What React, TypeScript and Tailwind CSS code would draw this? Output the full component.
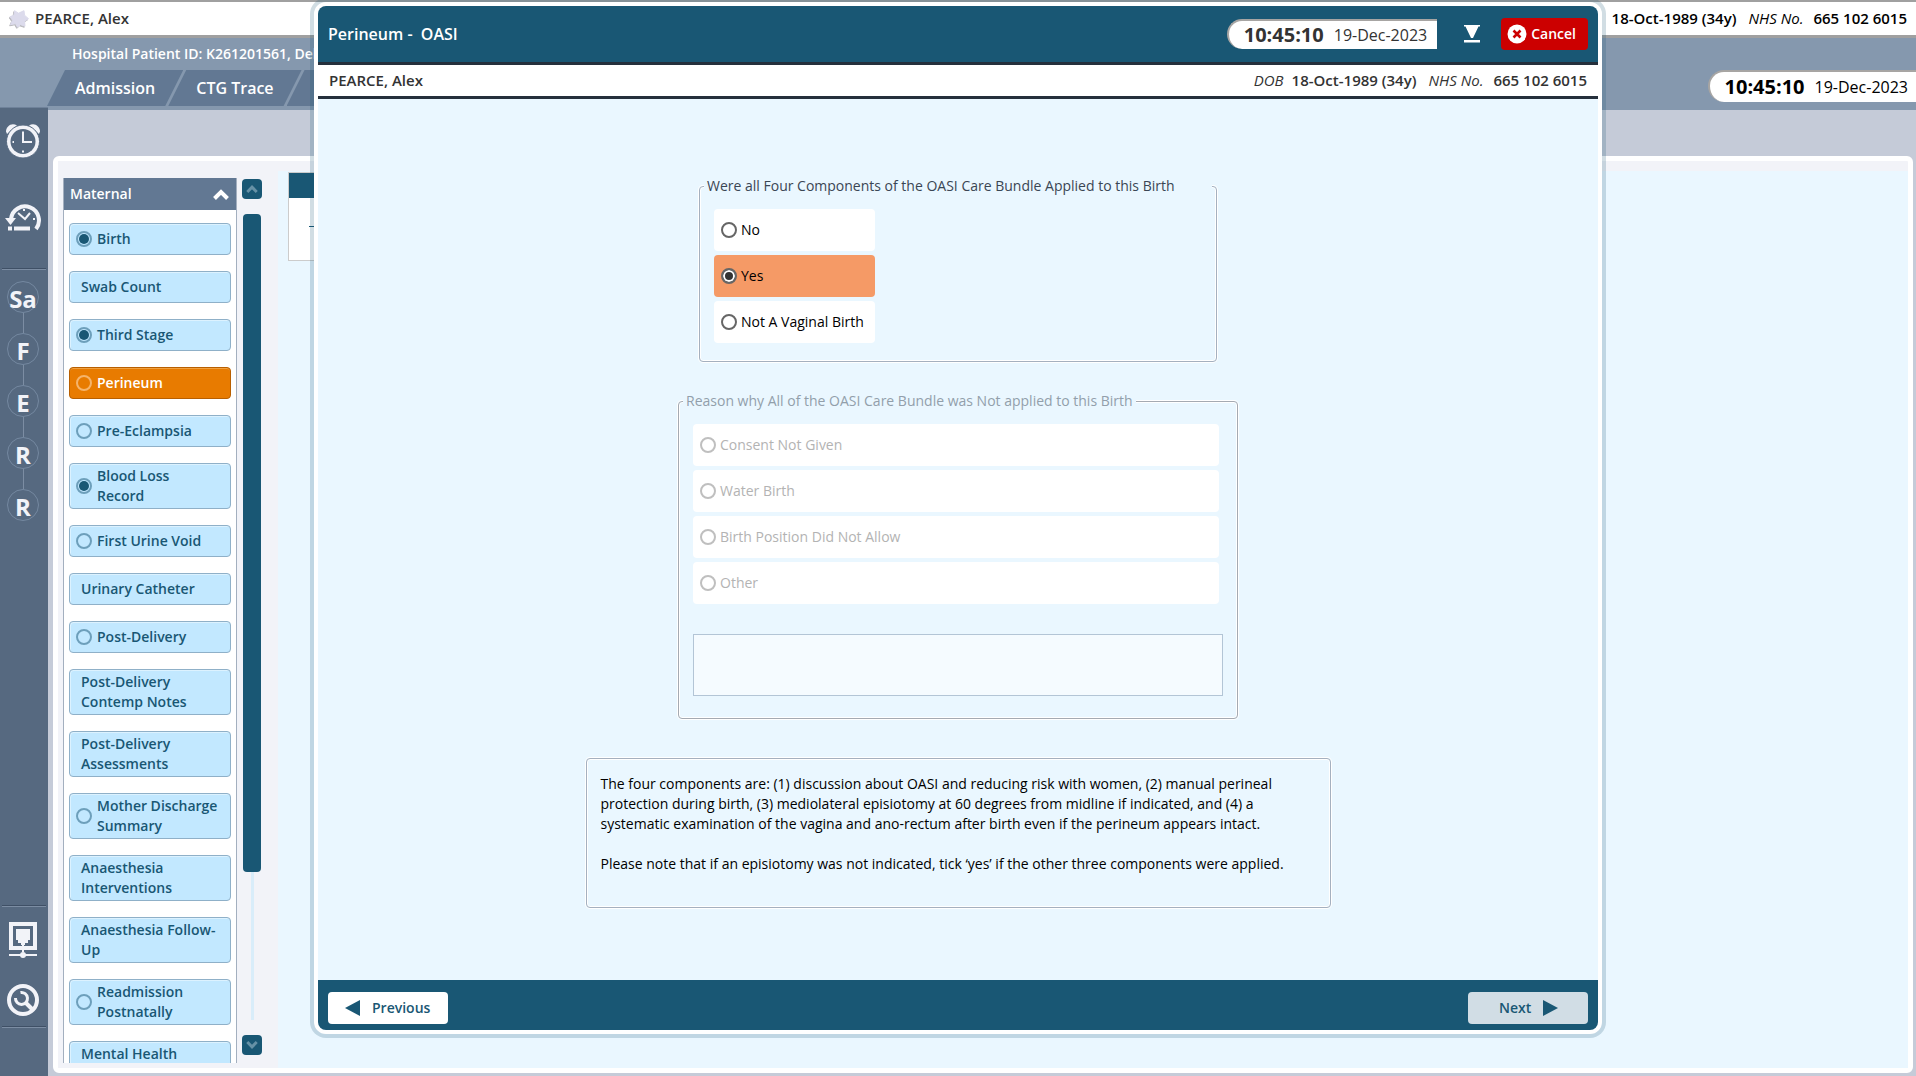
import { useState } from 'react'

interface MenuItem {
  label: string
  status?: 'empty' | 'done'
  active?: boolean
}

const menuItems: MenuItem[] = [
  { label: 'Birth', status: 'done' },
  { label: 'Swab Count' },
  { label: 'Third Stage', status: 'done' },
  { label: 'Perineum', status: 'empty', active: true },
  { label: 'Pre-Eclampsia', status: 'empty' },
  { label: 'Blood Loss Record', status: 'done' },
  { label: 'First Urine Void', status: 'empty' },
  { label: 'Urinary Catheter' },
  { label: 'Post-Delivery', status: 'empty' },
  { label: 'Post-Delivery Contemp Notes' },
  { label: 'Post-Delivery Assessments' },
  { label: 'Mother Discharge Summary', status: 'empty' },
  { label: 'Anaesthesia Interventions' },
  { label: 'Anaesthesia Follow-Up' },
  { label: 'Readmission Postnatally', status: 'empty' },
  { label: 'Mental Health Assessment' },
]

const stages = ['Sa', 'F', 'E', 'R', 'R']
const answers = ['No', 'Yes', 'Not A Vaginal Birth']
const reasons = ['Consent Not Given', 'Water Birth', 'Birth Position Did Not Allow', 'Other']

function StarIcon() {
  const star = 'M5 2l4 2.500L14.500 2l.500 4.500 4 3.500-4 2.500.500 5-4.500-1.500L8 18.500l-2-3.500-5 1 2-4.500L.500 8l4-1.500z'
  return (
    <svg viewBox="0 0 20 20" className="size-5" strokeWidth="1" strokeLinejoin="round">
      <path d={star} transform="translate(-.3 .8)" fill="#b9b9bd" stroke="#b9b9bd" />
      <path d={star} transform="translate(.5 -.3)" fill="#dcdbec" stroke="#dcdbec" />
    </svg>
  )
}

function AlarmIcon() {
  return (
    <svg viewBox="0 0 36 36" className="size-9" fill="none" stroke="#f2f3f8">
      <path d="M1 9.500C1 4 7 0 12 3.500L2 12Z" fill="#f2f3f8" stroke="none" />
      <path d="M35 9.500C35 4 29 0 24 3.500L34 12Z" fill="#f2f3f8" stroke="none" />
      <circle cx="18" cy="19.500" r="16.500" fill="#f2f3f8" stroke="#566980" strokeWidth="1" />
      <circle cx="18" cy="19.500" r="12.500" fill="#566980" stroke="none" />
      <path d="M18 9.500V20H27" strokeWidth="2" />
      <path d="M7.500 20h1.500M18 28.500v2" strokeWidth="2" />
    </svg>
  )
}

function HistoryIcon() {
  return (
    <svg viewBox="0 0 36 30" className="h-[30px] w-9" fill="none" stroke="#f2f3f8">
      <path d="M6 17A14 14 0 1 1 31 27" strokeWidth="4" />
      <path d="M0 16h11l-5.500 7z" fill="#f2f3f8" stroke="none" />
      <path d="M13 11l7 6 5-6" strokeWidth="2" />
      <path d="M19 7v2M28 17h2" strokeWidth="2" />
      <path d="M3 26.500h4M9 26.500h16" strokeWidth="4" />
    </svg>
  )
}

function NetworkIcon() {
  return (
    <svg viewBox="0 0 28 36" className="h-9 w-7" fill="#f2f3f8">
      <path d="M0 0h28v28H0zM4 4v20h20V4z" fillRule="evenodd" />
      <path d="M7 7h14v11h-2v3h-3v2h-4v-2H9v-3H7z" />
      <path d="M13 22h2v8h-2zM0 32h28v2H0z" />
      <circle cx="14" cy="33" r="3" />
    </svg>
  )
}

function WrenchIcon() {
  return (
    <svg viewBox="0 0 32 32" className="size-8" fill="none" stroke="#f2f3f8">
      <circle cx="16" cy="16" r="14" strokeWidth="4" />
      <path d="M13.500 8.500a6 6 0 1 1-5 5.500" strokeWidth="3" />
      <path d="M18.500 18.500l7.500 7.500" strokeWidth="4" />
    </svg>
  )
}

function Divider() {
  return <div className="ml-px h-0.5 w-11 border-t border-[#3f5066] bg-[#7c8da3]" />
}

function Sidebar() {
  return (
    <nav className="flex w-12 shrink-0 flex-col border-t border-[#6f829a] bg-[#566980]">
      <div className="flex w-[46px] flex-1 flex-col items-center">
        <button aria-label="Alarms" className="mt-3.5"><AlarmIcon /></button>
        <button aria-label="History" className="mt-11"><HistoryIcon /></button>
        <div className="mt-9"><Divider /></div>
        <div className="mt-[11px] flex flex-col items-center">
          {stages.map((stage, i) => (
            <div key={i} className="flex flex-col items-center">
              {i > 0 && <div className="h-5 w-px bg-[#7c8da3]" />}
              <button className="flex size-8 items-center justify-center rounded-full border border-[#7488a0] pt-1 text-2xl font-bold text-[#f2f3f8]">
                {stage}
              </button>
            </div>
          ))}
        </div>
        <div className="mt-auto"><Divider /></div>
        <button aria-label="Network" className="mt-[15px]"><NetworkIcon /></button>
        <button aria-label="Settings" className="mt-[26px]"><WrenchIcon /></button>
        <div className="mt-2.5 mb-12"><Divider /></div>
      </div>
    </nav>
  )
}

function MenuButton({ label, status, active }: MenuItem) {
  return (
    <button
      className={`flex min-h-8 w-full items-center gap-[5px] rounded-sm border py-0.5 pr-[11px] text-left text-sm leading-5 font-semibold
        ${status ? 'pl-1.5' : 'pl-[11px]'}
        ${active
          ? 'border-[#b85f00] bg-[#e87b00] text-white shadow-[inset_0_1px_0_#f0a040]'
          : 'border-[#8fb0c8] bg-[#c2e8ff] text-[#195774] shadow-[inset_1px_1px_0_#dcf2ff]'
        }
      `}
    >
      {status && (
        <span
          className={`flex size-4 shrink-0 items-center justify-center rounded-full border-2
            ${active ? 'border-[#f5b46b]' : 'border-[#6d9fbb]'}
          `}
        >
          {status === 'done' && <span className="size-2.5 rounded-full bg-[#195774]" />}
        </span>
      )}
      <span>{label}</span>
    </button>
  )
}

function Chevron({ className }: { className: string }) {
  return (
    <svg viewBox="0 0 16 11" className={className} fill="none" stroke="currentColor" strokeWidth="4">
      <path d="M1.500 9.500L8 3l6.500 6.500" />
    </svg>
  )
}

function MaternalMenu() {
  return (
    <div className="flex w-[220px] shrink-0 gap-[5px] bg-[#f2f3f8] pt-[17px] pb-[5px] pl-[5px]">
      <div className="flex w-[174px] flex-col overflow-hidden border-x border-[#a3afbf] bg-white">
        <button className="flex h-8 shrink-0 items-center justify-between bg-[#627893] pr-[7px] pl-1.5 text-sm font-semibold text-white">
          Maternal
          <Chevron className="h-[11px] w-4" />
        </button>
        <div className="flex min-h-0 flex-1 flex-col gap-4 overflow-hidden px-[5px] pt-[13px]">
          {menuItems.map((item) => (
            <div key={item.label} className="flex shrink-0 flex-col">
              <MenuButton {...item} />
            </div>
          ))}
        </div>
      </div>
      <div className="flex w-5 flex-col items-center pt-px pb-2">
        <button aria-label="Scroll up" className="flex size-5 items-center justify-center rounded bg-[#195774] text-[#6691a6]">
          <Chevron className="h-2 w-3" />
        </button>
        <div className="mt-[15px] flex w-full flex-1 flex-col items-center">
          <div className="h-[658px] w-[18px] rounded bg-[#195774]" />
          <div className="w-[3px] flex-1 bg-[#d9edfa]" />
        </div>
        <button aria-label="Scroll down" className="mt-[15px] flex size-5 items-center justify-center rounded bg-[#195774] text-[#6691a6]">
          <Chevron className="h-2 w-3 rotate-180" />
        </button>
      </div>
    </div>
  )
}

function Clock({ className }: { className: string }) {
  return (
    <div className={`flex items-center gap-2.5 rounded-l-2xl border-t-2 border-l-2 border-[#a7a5a3] bg-white pl-[15px] ${className}`}>
      <span className="text-xl font-bold">10:45:10</span>
      <span className="text-base font-medium">19-Dec-2023</span>
    </div>
  )
}

function PatientIds({ showDobLabel = false }: { showDobLabel?: boolean }) {
  return (
    <div className="flex items-center text-[15px] font-semibold">
      {showDobLabel && <span className="mr-2 font-normal italic">DOB</span>}
      <span className="mr-3">18-Oct-1989 (34y)</span>
      <span className="mr-2.5 font-normal italic">NHS No.</span>
      <span>665 102 6015</span>
    </div>
  )
}

function PageHeader() {
  return (
    <header>
      <div className="flex h-[38px] items-center justify-between border-t-2 border-b-3 border-[#a0a0a0] bg-white px-[9px] text-black">
        <div className="flex items-center gap-1.5 text-[15px] font-semibold text-[#333]">
          <StarIcon />
          PEARCE, Alex
        </div>
        <PatientIds />
      </div>
      <div className="flex h-[69px] items-end justify-between bg-[#8598ae]">
        <div className="w-[318px] overflow-hidden whitespace-nowrap">
          <p className="mb-1.5 pl-[72px] text-sm leading-5 font-semibold text-white">Hospital Patient ID: K261201561, Del</p>
          <div className="mb-px flex pl-[47px] text-base font-semibold text-white">
            {['Admission', 'CTG Trace', ''].map((tab) => (
              <button
                key={tab}
                aria-label={tab || 'More'}
                className="-mr-[15px] h-9 shrink-0 bg-[#627893] px-7 [clip-path:polygon(18px_0,100%_0,calc(100%-18px)_100%,0_100%)]"
              >
                {tab}
              </button>
            ))}
          </div>
        </div>
        <Clock className="mb-[5px] h-8 pr-2 text-black" />
      </div>
    </header>
  )
}

interface RadioOptionProps {
  name: string
  label: string
  checked?: boolean
  disabled?: boolean
  onChange?: () => void
}

function RadioOption({ name, label, checked = false, disabled, onChange }: RadioOptionProps) {
  return (
    <label
      className={`flex h-[42px] items-center gap-1 rounded px-[7px] text-sm
        ${checked ? 'bg-[#f59a66]' : 'bg-white'}
        ${disabled ? 'text-[#b3b3b3]' : 'text-black'}
      `}
    >
      <input
        type="radio"
        name={name}
        checked={checked}
        disabled={disabled}
        onChange={onChange}
        className="size-4 appearance-none rounded-full border-2 border-[#666] bg-white checked:bg-[#333] checked:shadow-[inset_0_0_0_2px_white] disabled:border-[#bfbfbf]"
      />
      {label}
    </label>
  )
}

function OasiDialog() {
  const [answer, setAnswer] = useState('Yes')

  return (
    <div
      role="dialog"
      aria-label="Perineum - OASI"
      className="absolute -top-0.5 right-[310px] bottom-[38px] left-[310px] rounded-2xl bg-[#195774]/20 p-1"
    >
      <div className="flex h-full flex-col overflow-hidden rounded-xl border-4 border-white bg-[#eaf7ff]">
        <div className="flex h-14 shrink-0 items-center bg-[#195774] px-2.5">
          <h1 className="text-base font-semibold whitespace-pre text-white">Perineum -  OASI</h1>
          <Clock className="ml-auto h-[30px] pr-2.5 text-[#333]" />
          <button aria-label="Minimise" className="ml-[27px]">
            <svg viewBox="0 0 16 18" className="h-[18px] w-4" fill="white">
              <path d="M0 0h16v1.500h-1.500L9 13H7L1.500 1.500H0zM0 15h16v2.500H0z" />
            </svg>
          </button>
          <button className="ml-[21px] flex h-8 items-center gap-1 rounded bg-[#cc0000] pr-3 pl-1.5 text-sm font-semibold text-white">
            <svg viewBox="0 0 20 20" className="size-5">
              <circle cx="10" cy="10" r="9.500" fill="white" />
              <path d="M6.500 6.500l7 7M13.500 6.500l-7 7" stroke="#cc0000" strokeWidth="2.600" />
            </svg>
            Cancel
          </button>
        </div>
        <div className="flex h-[37px] shrink-0 items-center justify-between border-y-3 border-[#25303c] bg-white px-[11px] text-[15px] font-semibold text-[#333]">
          <span>PEARCE, Alex</span>
          <PatientIds showDobLabel />
        </div>

        <div className="flex min-h-0 flex-1 flex-col items-center overflow-hidden pt-[77px]">
          <fieldset className="w-[518px] rounded border border-[#a5b0bf] px-3.5 pb-[18px] shadow-[0_0_0_1px_white,inset_0_0_0_1px_white]">
            <legend className="-mx-2.5 w-[508px] bg-[#eaf7ff] px-[3px] text-sm text-[#3a4654]">
              Were all Four Components of the OASI Care Bundle Applied to this Birth
            </legend>
            <div className="flex w-fit min-w-[161px] flex-col gap-1 pt-[13px]">
              {answers.map((label) => (
                <RadioOption
                  key={label}
                  name="bundle"
                  label={label}
                  checked={answer === label}
                  onChange={() => setAnswer(label)}
                />
              ))}
            </div>
          </fieldset>

          <fieldset disabled className="mt-[29px] w-[560px] rounded border border-[#a5aab2] px-3.5 pb-[22px] shadow-[0_0_0_1px_white,inset_0_0_0_1px_white]">
            <legend className="-ml-2.5 bg-[#eaf7ff] px-[3px] text-sm text-[#929fab]">
              Reason why All of the OASI Care Bundle was Not applied to this Birth
            </legend>
            <div className="mr-1 flex flex-col gap-1 pt-[13px]">
              {reasons.map((label) => (
                <RadioOption key={label} name="reason" label={label} disabled />
              ))}
            </div>
            <textarea
              aria-label="Other reason"
              className="mt-[30px] block h-[62px] w-full resize-none border border-[#b3c5d6] bg-[#f5fbff]"
            />
          </fieldset>

          <div className="mt-[39px] w-[745px] rounded-sm border border-[#a5b0bf] px-3.5 pt-[15px] pb-[33px] text-sm text-black shadow-[0_0_0_1px_white,inset_0_0_0_1px_white]">
            <p>
              The four components are: (1) discussion about OASI and reducing risk with women, (2) manual perineal
              protection during birth, (3) mediolateral episiotomy at 60 degrees from midline if indicated, and (4) a
              systematic examination of the vagina and ano-rectum after birth even if the perineum appears intact.
            </p>
            <p className="mt-5">
              Please note that if an episiotomy was not indicated, tick ‘yes’ if the other three components were applied.
            </p>
          </div>
        </div>

        <div className="flex h-[50px] shrink-0 items-center justify-between bg-[#195774] px-2.5 pt-1.5 text-sm font-semibold text-[#195774]">
          <button className="flex h-8 w-[120px] items-center gap-3 rounded bg-white pl-[17px]">
            <svg viewBox="0 0 15 16" className="h-4 w-[15px]" fill="currentColor"><path d="M15 0v16L0 8z" /></svg>
            Previous
          </button>
          <button className="flex h-8 w-[120px] items-center gap-3 rounded bg-[#d1dde5] pl-[31px]">
            Next
            <svg viewBox="0 0 15 16" className="h-4 w-[15px]" fill="currentColor"><path d="M0 0v16l15-8z" /></svg>
          </button>
        </div>
      </div>
    </div>
  )
}

export default function App() {
  return (
    <div className="relative flex h-screen flex-col overflow-hidden bg-[#c5cbd8] font-['Open_Sans','Noto_Sans',sans-serif]">
      <PageHeader />
      <div className="flex min-h-0 flex-1">
        <Sidebar />
        <div className="flex min-w-0 flex-1 flex-col border-t-3 border-[#8598ae] pr-[3px] pb-[3px] pl-[5px]">
          <main className="mt-[46px] flex min-h-0 flex-1 rounded-md border-5 border-white bg-[#f2f3f8]">
            <MaternalMenu />
            <section className="mt-2.5 flex-1 bg-[#eaf7ff] pl-2.5">
              <div className="mt-px h-[89px] w-1/2 border border-[#cccccc] bg-white">
                <div className="h-[25px] bg-[#195774]" />
                <div className="mt-7 ml-5 h-px bg-[#195774]" />
              </div>
            </section>
          </main>
        </div>
      </div>
      <OasiDialog />
    </div>
  )
}
